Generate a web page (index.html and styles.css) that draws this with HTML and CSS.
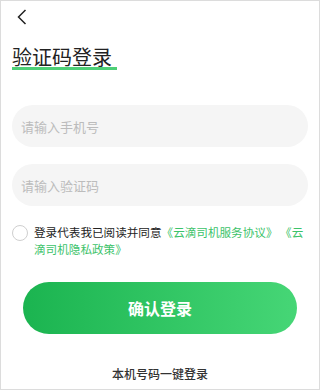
FILE: index.html
```html
<!DOCTYPE html>
<html>
<head>
    <meta charset="UTF-8">
    <title>验证码登录</title>
    <link rel="stylesheet" href="styles.css">
</head>
<body>
    <div class="page">
        <div class="header">
            <a href="javascript:;" class="back">
                <svg width="10" height="16" viewBox="0 0 10 16">
                    <polyline points="8.5,1 1.5,8 8.5,15" fill="none" stroke="#222" stroke-width="1.5"/>
                </svg>
            </a>
        </div>
        <h1 class="title"><span>验证码登录</span></h1>
        <div class="form">
            <input class="field" type="text" placeholder="请输入手机号">
            <input class="field" type="text" placeholder="请输入验证码">
        </div>
        <div class="agree">
            <span class="check"></span>
            <p>登录代表我已阅读并同意<a href="javascript:;">《云滴司机服务协议》</a> <a href="javascript:;">《云滴司机隐私政策》</a></p>
        </div>
        <a href="javascript:;" class="btn">确认登录</a>
        <a href="javascript:;" class="other">本机号码一键登录</a>
    </div>
</body>
</html>
```

FILE: styles.css
```css
/* reset */
* {
    margin: 0;
    padding: 0;
    box-sizing: border-box;
}
a {
    text-decoration: none;
}
body {
    font-family: "Noto Sans CJK SC", "Noto Sans", sans-serif;
    color: #222;
    background: #fff;
}
.page {
    width: 320px;
    height: 390px;
    border: 1px solid #dcdcdc;
    padding: 0 11px;
}
/* 顶部返回 */
.header {
    height: 36px;
    padding-top: 8px;
}
.header .back {
    display: block;
    width: 10px;
    height: 16px;
    margin-left: 5px;
}
.header .back svg {
    display: block;
}
/* 标题，下面带一条绿线 */
.title {
    margin-top: 10px;
    font-size: 20px;
    line-height: 20px;
    font-weight: normal;
}
.title span {
    display: inline-block;
    padding: 0 5px 3px 0;
    background: linear-gradient(#4dcf76, #4dcf76) left bottom / 100% 3px no-repeat;
}
/* 输入框 */
.form {
    margin-top: 35px;
}
.field {
    display: block;
    width: 100%;
    height: 42px;
    border: none;
    outline: none;
    border-radius: 21px;
    background: #f5f5f5;
    padding-left: 9px;
    font-family: inherit;
    font-size: 13px;
    color: #333;
}
.field + .field {
    margin-top: 17px;
}
.field::placeholder {
    color: #bcbcbc;
}
/* 协议 */
.agree {
    display: flex;
    margin-top: 18px;
    font-size: 11.6px;
    line-height: 17px;
    color: #222;
}
.agree .check {
    flex: none;
    width: 16px;
    height: 16px;
    margin: 1px 6px 0 0;
    border: 1px solid #cfcfcf;
    border-radius: 50%;
}
.agree p {
    flex: 1;
}
.agree a {
    color: #3cc36a;
}
/* 按钮 */
.btn {
    display: block;
    height: 52px;
    margin: 24px 11px 0;
    border-radius: 26px;
    background: linear-gradient(to right, #1bb450, #46d676);
    color: #fff;
    font-size: 16px;
    font-weight: bold;
    line-height: 52px;
    text-align: center;
}
.other {
    display: block;
    margin-top: 30px;
    font-size: 12px;
    line-height: 20px;
    font-weight: 500;
    color: #333;
    text-align: center;
}
```
